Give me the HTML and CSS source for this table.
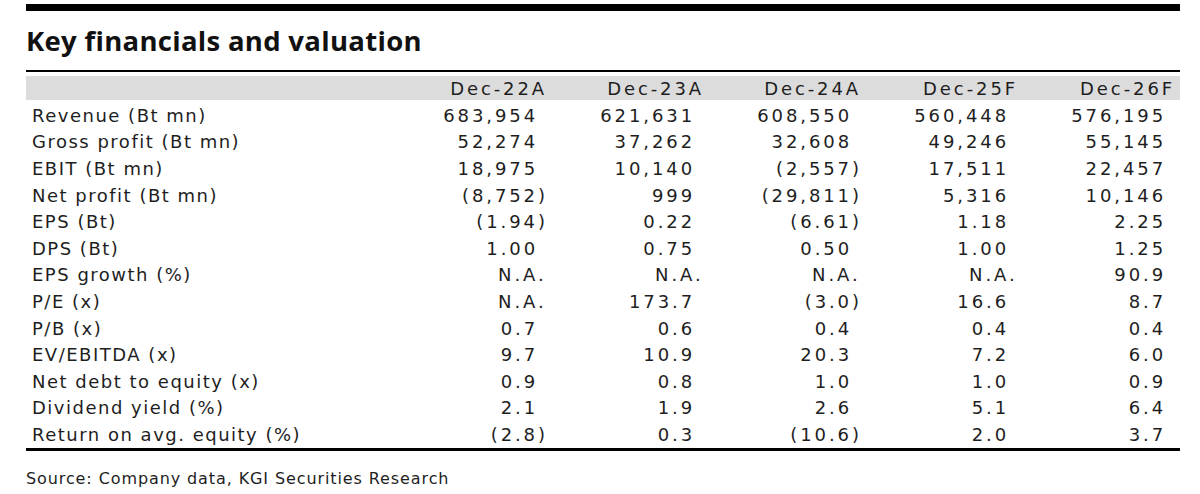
FILE: index.html
```html
<!DOCTYPE html>
<html lang="en">
<head>
<meta charset="utf-8">
<title>Key financials and valuation</title>
<link rel="stylesheet" href="styles.css">
</head>
<body>
<div class="page">
  <div class="topbar"></div>
  <h1 class="title">Key financials and valuation</h1>
  <div class="table">
    <div class="row head">
      <div class="label"></div>
      <div class="cell">Dec-22A</div>
      <div class="cell">Dec-23A</div>
      <div class="cell">Dec-24A</div>
      <div class="cell">Dec-25F</div>
      <div class="cell">Dec-26F</div>
    </div>
    <div class="row">
      <div class="label">Revenue (Bt mn)</div>
      <div class="cell num">683,954</div>
      <div class="cell num">621,631</div>
      <div class="cell num">608,550</div>
      <div class="cell num">560,448</div>
      <div class="cell num">576,195</div>
    </div>
    <div class="row">
      <div class="label">Gross profit (Bt mn)</div>
      <div class="cell num">52,274</div>
      <div class="cell num">37,262</div>
      <div class="cell num">32,608</div>
      <div class="cell num">49,246</div>
      <div class="cell num">55,145</div>
    </div>
    <div class="row">
      <div class="label">EBIT (Bt mn)</div>
      <div class="cell num">18,975</div>
      <div class="cell num">10,140</div>
      <div class="cell num">(2,557<span class="hang">)</span></div>
      <div class="cell num">17,511</div>
      <div class="cell num">22,457</div>
    </div>
    <div class="row">
      <div class="label">Net profit (Bt mn)</div>
      <div class="cell num">(8,752<span class="hang">)</span></div>
      <div class="cell num">999</div>
      <div class="cell num">(29,811<span class="hang">)</span></div>
      <div class="cell num">5,316</div>
      <div class="cell num">10,146</div>
    </div>
    <div class="row">
      <div class="label">EPS (Bt)</div>
      <div class="cell num">(1.94<span class="hang">)</span></div>
      <div class="cell num">0.22</div>
      <div class="cell num">(6.61<span class="hang">)</span></div>
      <div class="cell num">1.18</div>
      <div class="cell num">2.25</div>
    </div>
    <div class="row">
      <div class="label">DPS (Bt)</div>
      <div class="cell num">1.00</div>
      <div class="cell num">0.75</div>
      <div class="cell num">0.50</div>
      <div class="cell num">1.00</div>
      <div class="cell num">1.25</div>
    </div>
    <div class="row">
      <div class="label">EPS growth (%)</div>
      <div class="cell num">N.A<span class="hang dot">.</span></div>
      <div class="cell num">N.A<span class="hang dot">.</span></div>
      <div class="cell num">N.A<span class="hang dot">.</span></div>
      <div class="cell num">N.A<span class="hang dot">.</span></div>
      <div class="cell num">90.9</div>
    </div>
    <div class="row">
      <div class="label">P/E (x)</div>
      <div class="cell num">N.A<span class="hang dot">.</span></div>
      <div class="cell num">173.7</div>
      <div class="cell num">(3.0<span class="hang">)</span></div>
      <div class="cell num">16.6</div>
      <div class="cell num">8.7</div>
    </div>
    <div class="row">
      <div class="label">P/B (x)</div>
      <div class="cell num">0.7</div>
      <div class="cell num">0.6</div>
      <div class="cell num">0.4</div>
      <div class="cell num">0.4</div>
      <div class="cell num">0.4</div>
    </div>
    <div class="row">
      <div class="label">EV/EBITDA (x)</div>
      <div class="cell num">9.7</div>
      <div class="cell num">10.9</div>
      <div class="cell num">20.3</div>
      <div class="cell num">7.2</div>
      <div class="cell num">6.0</div>
    </div>
    <div class="row">
      <div class="label">Net debt to equity (x)</div>
      <div class="cell num">0.9</div>
      <div class="cell num">0.8</div>
      <div class="cell num">1.0</div>
      <div class="cell num">1.0</div>
      <div class="cell num">0.9</div>
    </div>
    <div class="row">
      <div class="label">Dividend yield (%)</div>
      <div class="cell num">2.1</div>
      <div class="cell num">1.9</div>
      <div class="cell num">2.6</div>
      <div class="cell num">5.1</div>
      <div class="cell num">6.4</div>
    </div>
    <div class="row">
      <div class="label">Return on avg. equity (%)</div>
      <div class="cell num">(2.8<span class="hang">)</span></div>
      <div class="cell num">0.3</div>
      <div class="cell num">(10.6<span class="hang">)</span></div>
      <div class="cell num">2.0</div>
      <div class="cell num">3.7</div>
    </div>
  </div>
  <p class="source">Source: Company data, KGI Securities Research</p>
</div>
</body>
</html>
```

FILE: styles.css
```css
html, body {
  margin: 0;
  padding: 0;
  background: #ffffff;
}

body {
  font-family: "DejaVu Sans", "Noto Sans", sans-serif;
  color: #1e1e1e;
}

.page {
  width: 1154px;
  margin-left: 26px;
  padding-top: 4px;
}

.topbar {
  height: 7px;
  background: #000000;
}

.title {
  margin: 15px 0 14px 0;
  font-family: "Open Sans", "Noto Sans", sans-serif;
  font-size: 27.5px;
  line-height: 30px;
  font-weight: 700;
  letter-spacing: 0.3px;
  color: #111111;
}

.table {
  border-top: 2px solid #000000;
  border-bottom: 3px solid #000000;
}

.row {
  display: grid;
  grid-template-columns: 1fr repeat(5, 157px);
  padding-right: 5px;
  height: 26.6px;
  align-items: center;
  font-size: 18px;
}

.row.head {
  height: 24px;
  margin-top: 4px;
  margin-bottom: 2px;
  background: #dcdcdc;
}

.label {
  padding-left: 6px;
  letter-spacing: 1.5px;
  white-space: nowrap;
}

.cell {
  text-align: right;
  letter-spacing: 2.9px;
  white-space: nowrap;
}

.cell.num {
  padding-right: 9px;
}

.hang {
  margin-right: -9.9px;
}

.hang.dot {
  margin-right: -8.6px;
}

.source {
  margin: 18px 0 0 0;
  font-size: 16px;
  line-height: 20px;
  letter-spacing: 0.9px;
  color: #1e1e1e;
}
```
